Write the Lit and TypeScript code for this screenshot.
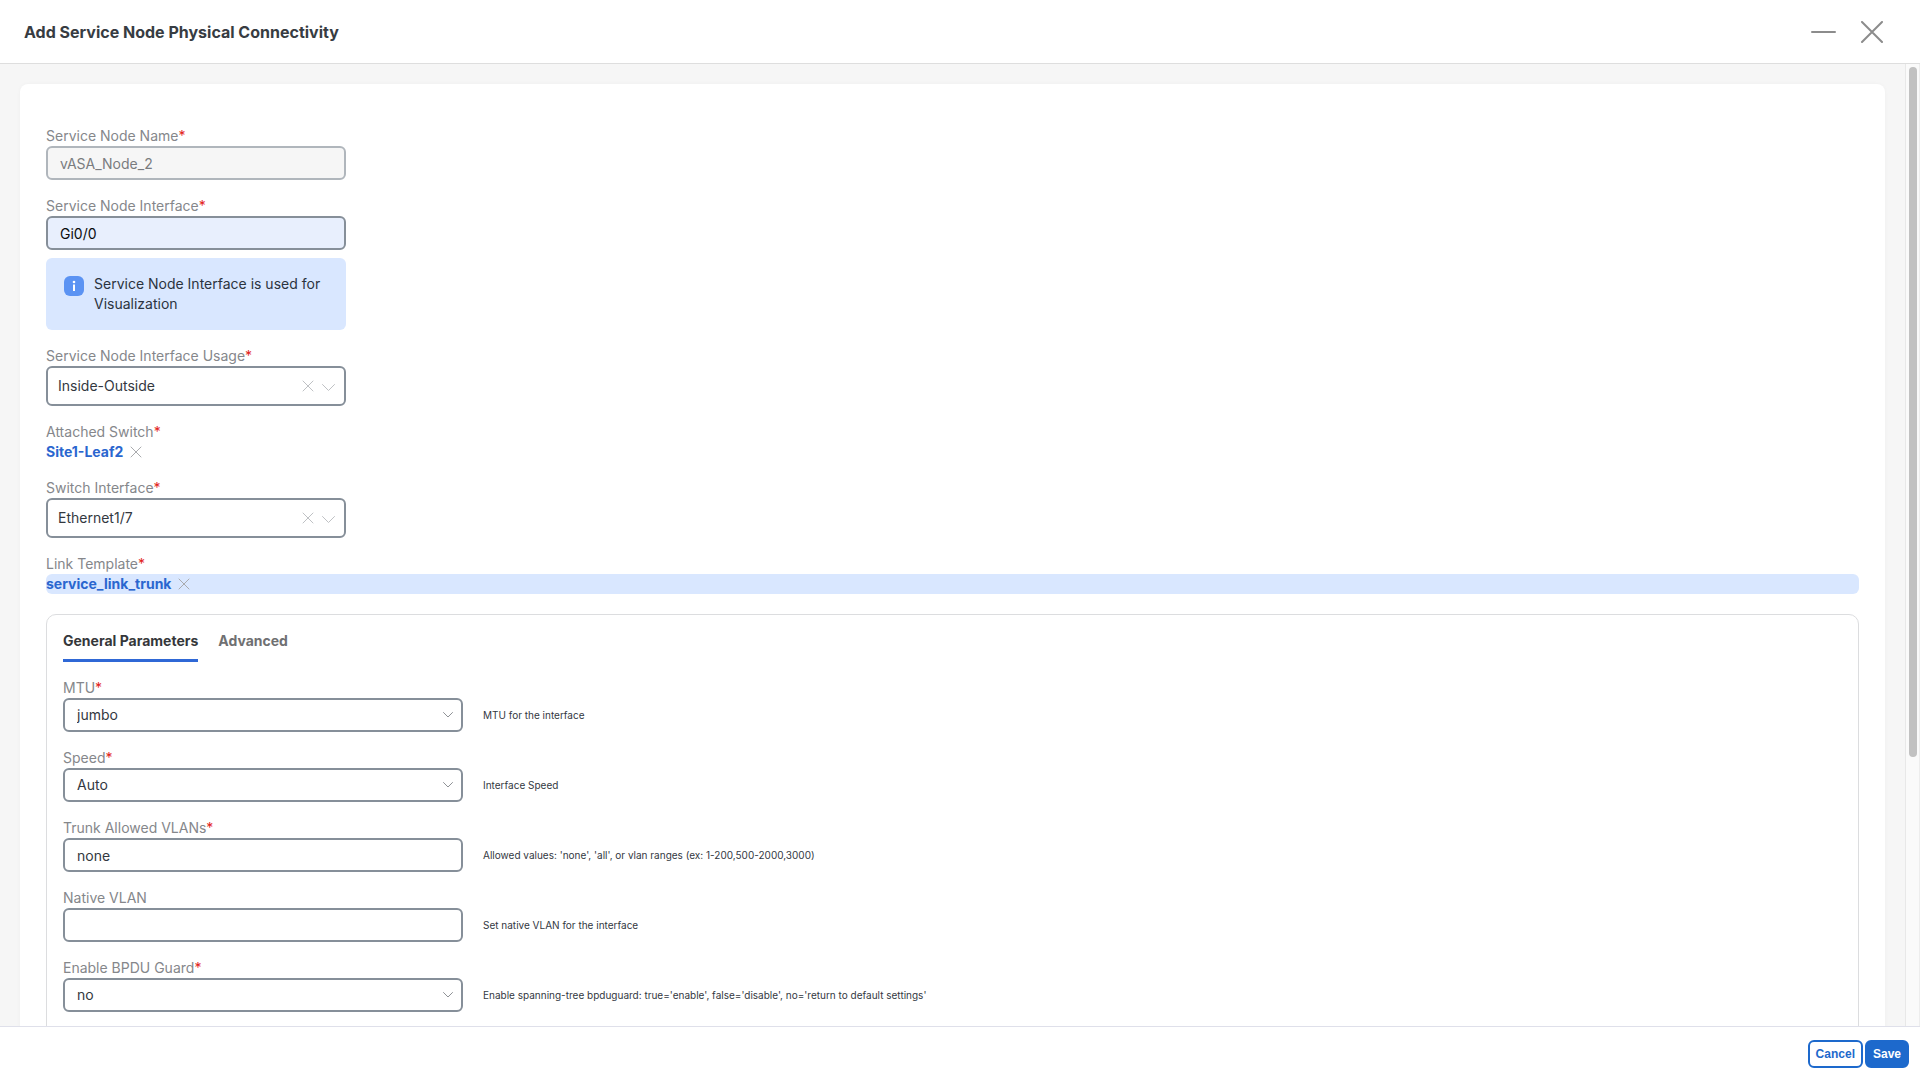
import { LitElement, html, css, svg, nothing } from "lit";
import { customElement, state } from "lit/decorators.js";

interface Parameter {
  id: string;
  label: string;
  value: string;
  hint: string;
  required: boolean;
  options?: string[];
}

const PARAMETERS: Parameter[] = [
  { id: "mtu", label: "MTU", value: "jumbo", hint: "MTU for the interface", required: true, options: ["jumbo", "default"] },
  { id: "speed", label: "Speed", value: "Auto", hint: "Interface Speed", required: true, options: ["Auto", "100Mb", "1Gb", "10Gb"] },
  {
    id: "vlans",
    label: "Trunk Allowed VLANs",
    value: "none",
    hint: "Allowed values: 'none', 'all', or vlan ranges (ex: 1-200,500-2000,3000)",
    required: true,
  },
  { id: "native", label: "Native VLAN", value: "", hint: "Set native VLAN for the interface", required: false },
  {
    id: "bpdu",
    label: "Enable BPDU Guard",
    value: "no",
    hint: "Enable spanning-tree bpduguard: true='enable', false='disable', no='return to default settings'",
    required: true,
    options: ["no", "true", "false"],
  },
];

const crossPath = svg`<path d="M1 1L11 11M11 1L1 11" />`;

@customElement("app-root")
export class AppRoot extends LitElement {
  @state() private tab = "General Parameters";

  static styles = css`
    :host {
      display: flex;
      flex-direction: column;
      height: 100vh;
      overflow: hidden;
      background: #fff;
      color: #33383f;
      font: 14px/20px Inter, "Liberation Sans", sans-serif;
    }
    * {
      box-sizing: border-box;
    }
    button,
    input,
    select {
      margin: 0;
      font: inherit;
      color: inherit;
    }
    button {
      padding: 0;
      border: 0;
      background: none;
      cursor: pointer;
    }
    svg {
      display: block;
      flex: none;
      fill: none;
      stroke: currentColor;
      stroke-linecap: round;
      stroke-linejoin: round;
    }
    .header {
      flex: none;
      display: flex;
      align-items: center;
      justify-content: space-between;
      height: 64px;
      padding: 0 36px 0 24px;
      border-bottom: 1px solid #dedede;
    }
    .title {
      margin: 0;
      font-size: 16px;
      font-weight: 700;
      color: #373c42;
    }
    .window-actions {
      display: flex;
      align-items: center;
      gap: 24px;
      color: #8c8c8c;
    }
    .main {
      flex: 1;
      min-height: 0;
      display: flex;
      background: #f6f6f6;
    }
    .scroller {
      flex: 1;
      min-width: 0;
      overflow: hidden;
      padding: 20px;
    }
    .track {
      flex: none;
      width: 15px;
      padding: 3px 2px 0 3px;
      border-left: 1px solid #e8e8e8;
      border-right: 1px solid #ededed;
      background: #fafafa;
    }
    .thumb {
      height: 72%;
      min-height: 24px;
      border-radius: 4px;
      background: #c1c1c1;
    }
    .card {
      display: flex;
      flex-direction: column;
      gap: 16px;
      padding: 42px 26px 26px;
      border-radius: 8px;
      background: #fff;
      box-shadow: 0 0 4px rgba(0, 0, 0, 0.03);
    }
    .field {
      display: flex;
      flex-direction: column;
    }
    .label {
      color: #85878b;
    }
    .star {
      color: #e2231a;
    }
    .narrow {
      width: 300px;
    }
    .box {
      display: flex;
      align-items: center;
      height: 34px;
      padding: 0 8px 0 12px;
      border: 2px solid #868f99;
      border-radius: 6px;
      background: #fff;
    }
    .box.tall {
      height: 40px;
      padding: 0 9px 0 10px;
    }
    .box.off {
      border-color: #b0b6bc;
      background: #f6f6f6;
      color: #7a7c7f;
    }
    .box.filled {
      background: #e8effd;
      color: #0b0c0d;
    }
    .control {
      flex: 1;
      min-width: 0;
      height: 100%;
      padding: 0;
      border: 0;
      outline: 0;
      background: transparent;
      appearance: none;
      opacity: 1;
    }
    .marks {
      display: flex;
      align-items: center;
      gap: 8px;
      color: #bfc1c4;
    }
    .caret {
      color: #8f9296;
    }
    .info {
      display: flex;
      gap: 10px;
      margin-top: 8px;
      padding: 16px 18px;
      border-radius: 6px;
      background: #d9e7ff;
      color: #2b3440;
    }
    .info p {
      margin: 0;
    }
    .info svg {
      margin-top: 2px;
    }
    .chosen {
      display: flex;
      align-items: center;
      gap: 7px;
      border-radius: 6px;
      color: #a9abae;
    }
    .chosen.lit {
      background: #d9e7ff;
    }
    .link {
      color: #2a66cf;
      font-weight: 700;
      text-decoration: none;
    }
    .panel {
      display: flex;
      flex-direction: column;
      gap: 16px;
      margin-top: 4px;
      padding: 16px 16px 40px;
      border: 1px solid #dcdddf;
      border-radius: 10px;
    }
    .tabs {
      display: flex;
      gap: 20px;
    }
    .tab {
      padding-bottom: 8px;
      border-bottom: 3px solid transparent;
      font-weight: 700;
      color: #6f7072;
    }
    .tab.active {
      border-color: #2f68d6;
      color: #35373a;
    }
    .row {
      display: flex;
      align-items: center;
      gap: 20px;
    }
    .wide {
      width: 400px;
    }
    .hint {
      font-size: 10px;
      color: #33383f;
    }
    .footer {
      flex: none;
      display: flex;
      justify-content: flex-end;
      gap: 2px;
      padding: 13px 11px 12px;
      border-top: 1px solid #dfe0ea;
    }
    .action {
      height: 28px;
      padding: 0 6px;
      border: 2px solid #1d69cc;
      border-radius: 6px;
      font: 700 12px/20px "Liberation Sans", Arial, sans-serif;
      color: #1d69cc;
      background: #fff;
    }
    .action.primary {
      background: #1d69cc;
      color: #fff;
    }
  `;

  private label(id: string, text: string, required = true) {
    return html`<label class="label" for=${id}>${text}${required ? html`<span class="star">*</span>` : nothing}</label>`;
  }

  private cross() {
    return html`<svg width="12" height="12" viewBox="0 0 12 12">${crossPath}</svg>`;
  }

  private clearable(id: string, label: string, value: string) {
    return html`<div class="field narrow">
      ${this.label(id, label)}
      <div class="box tall">
        <select class="control" id=${id}>
          <option>${value}</option>
        </select>
        <div class="marks">
          <button aria-label="Clear ${label}">${this.cross()}</button>
          <svg width="13" height="12" viewBox="0 0 13 12"><path d="M0.5 4.500L6.500 10.500L12.500 4.500" /></svg>
        </div>
      </div>
    </div>`;
  }

  private chosen(id: string, label: string, value: string, highlighted: boolean) {
    return html`<div class="field">
      ${this.label(id, label)}
      <div class="chosen ${highlighted ? "lit" : ""}">
        <a class="link" id=${id} href="#${id}">${value}</a>
        <button aria-label="Remove ${value}">${this.cross()}</button>
      </div>
    </div>`;
  }

  private parameter(p: Parameter) {
    return html`<div class="field">
      ${this.label(p.id, p.label, p.required)}
      <div class="row">
        <div class="box wide">
          ${p.options
            ? html`<select class="control" id=${p.id}>
                  ${p.options.map((o) => html`<option ?selected=${o === p.value}>${o}</option>`)}
                </select>
                <svg class="caret" width="10" height="6" viewBox="0 0 10 6"><path d="M0.5 0.5L5 5L9.500 0.5" /></svg>`
            : html`<input class="control" id=${p.id} type="text" .value=${p.value} />`}
        </div>
        <span class="hint">${p.hint}</span>
      </div>
    </div>`;
  }

  render() {
    return html`
      <header class="header">
        <h1 class="title">Add Service Node Physical Connectivity</h1>
        <div class="window-actions">
          <button aria-label="Minimize">
            <svg width="27" height="22" viewBox="0 0 27 22" stroke-width="2"><path d="M3 11H26" /></svg>
          </button>
          <button aria-label="Close">
            <svg width="24" height="22" viewBox="0 0 24 22" stroke-width="2"><path d="M2 1L22 21M22 1L2 21" /></svg>
          </button>
        </div>
      </header>
      <main class="main">
        <div class="scroller">
          <section class="card">
            <div class="field narrow">
              ${this.label("name", "Service Node Name")}
              <div class="box off"><input class="control" id="name" type="text" value="vASA_Node_2" disabled /></div>
            </div>
            <div class="field narrow">
              ${this.label("iface", "Service Node Interface")}
              <div class="box filled"><input class="control" id="iface" type="text" value="Gi0/0" /></div>
              <div class="info">
                <svg width="20" height="20" viewBox="0 0 20 20">
                  <rect width="20" height="20" rx="6" fill="#5b93f3" stroke="none" />
                  <circle cx="10" cy="6" r="1.300" fill="#fff" stroke="none" />
                  <path d="M10 8.500V15" stroke="#fff" stroke-width="2" stroke-linecap="butt" />
                </svg>
                <p>Service Node Interface is used for Visualization</p>
              </div>
            </div>
            ${this.clearable("usage", "Service Node Interface Usage", "Inside-Outside")}
            ${this.chosen("switch", "Attached Switch", "Site1-Leaf2", false)}
            ${this.clearable("swif", "Switch Interface", "Ethernet1/7")}
            ${this.chosen("template", "Link Template", "service_link_trunk", true)}
            <div class="panel">
              <div class="tabs" role="tablist">
                ${["General Parameters", "Advanced"].map(
                  (t) => html`<button
                    class="tab ${t === this.tab ? "active" : ""}"
                    role="tab"
                    aria-selected=${t === this.tab}
                    @click=${() => (this.tab = t)}
                  >
                    ${t}
                  </button>`
                )}
              </div>
              ${PARAMETERS.map((p) => this.parameter(p))}
            </div>
          </section>
        </div>
        <div class="track"><div class="thumb"></div></div>
      </main>
      <footer class="footer">
        <button class="action">Cancel</button>
        <button class="action primary">Save</button>
      </footer>
    `;
  }
}
